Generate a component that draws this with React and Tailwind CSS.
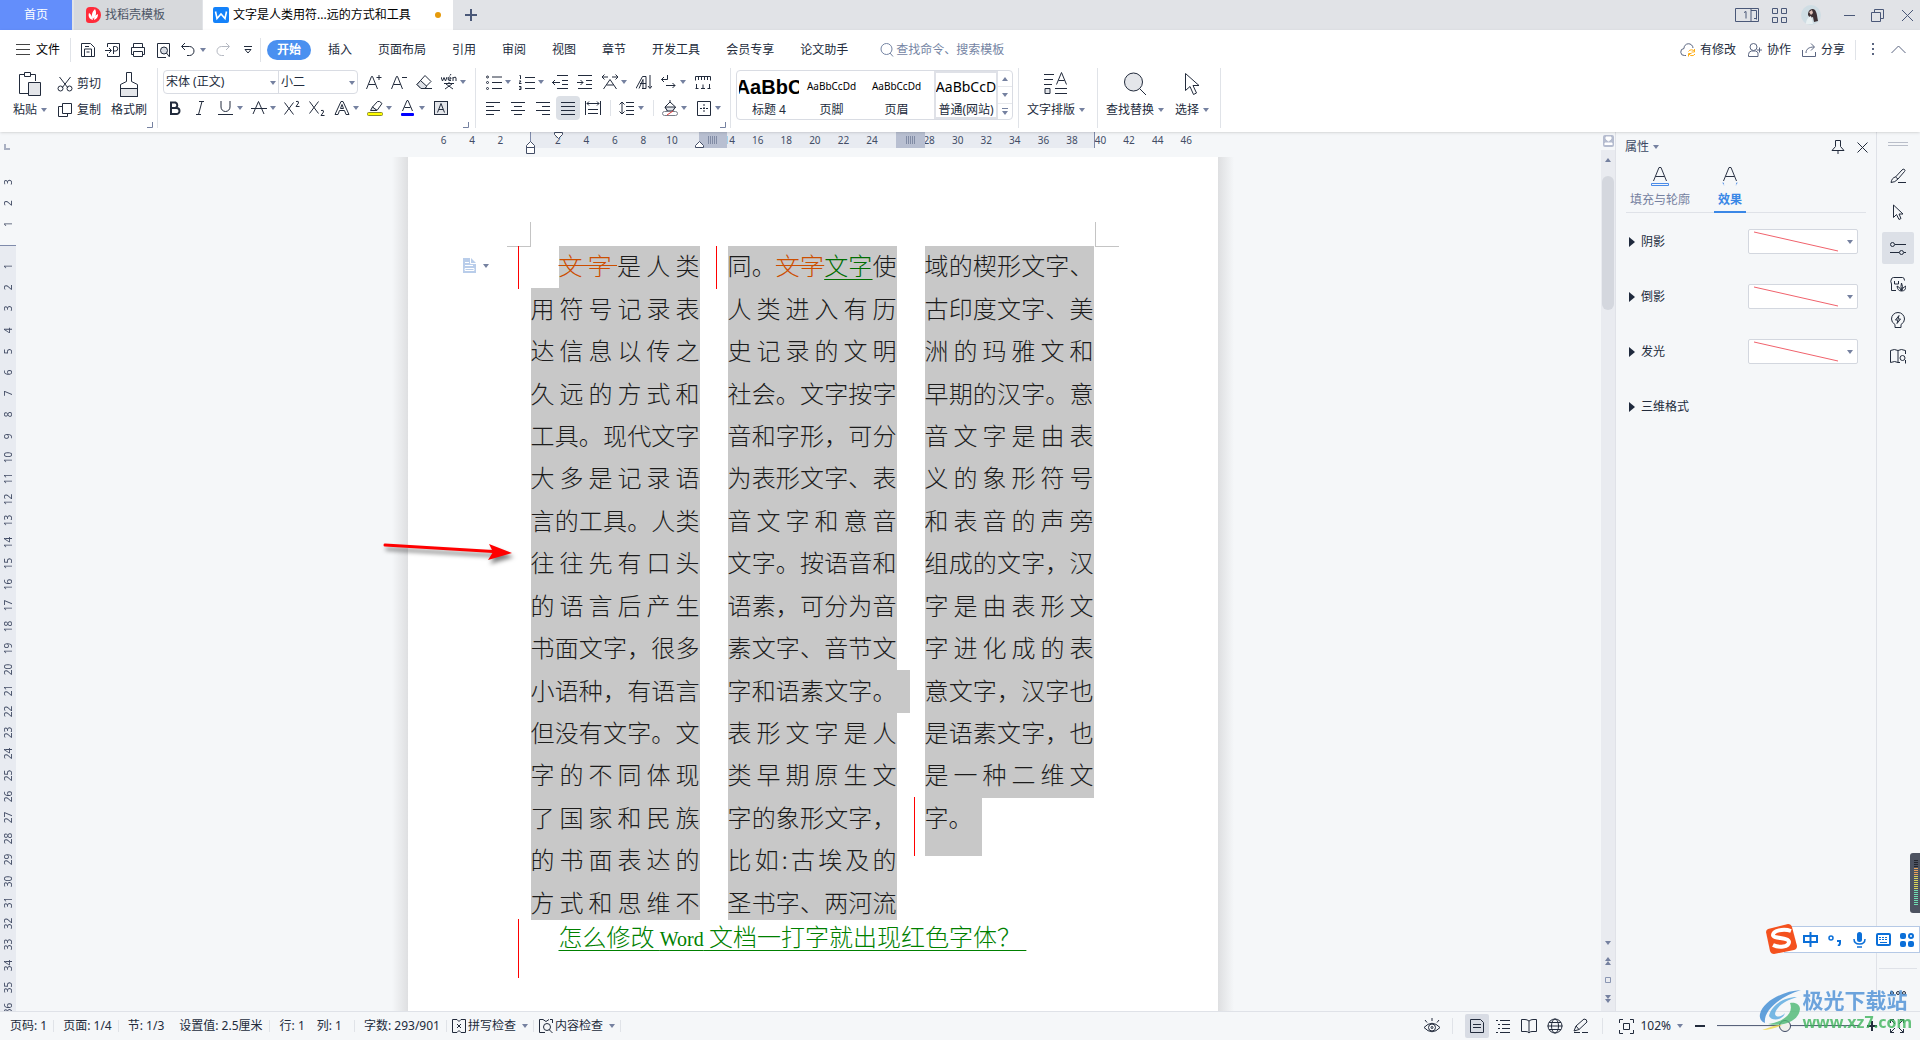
import React from "react";

const Ico = ({ d, w = 16, h = 16, className = "", children }) => (
  <svg width={w} height={h} viewBox={`0 0 ${w} ${h}`} fill="none" stroke="currentColor" className={`shrink-0 ${className}`} aria-hidden="true">
    {d && <path d={d} />}
    {children}
  </svg>
);

const Caret = ({ className = "" }) => (
  <svg width="6" height="4" viewBox="0 0 6 4" className={`shrink-0 fill-[#7581a0] ${className}`} aria-hidden="true">
    <path d="M0 0h6L3 4z" />
  </svg>
);

// icon button of the ribbon, with an optional drop-down arrow
const Tool = ({ label, d, drop, children }) =>
  drop ? (
    <button type="button" aria-label={label} className="flex h-6 w-[33px] items-center gap-[3px]">
      <Ico d={d}>{children}</Ico>
      <Caret />
    </button>
  ) : (
    <button type="button" aria-label={label} className="flex h-6 w-[25px] items-center">
      <Ico d={d}>{children}</Ico>
    </button>
  );

const Rule = ({ className = "" }) => <div className={`w-px shrink-0 bg-[#e0e3e8] ${className}`} />;

const Corner = () => <Ico w={6} h={6} d="M5.5 0v5.5H0" className="self-end text-[#7581a0]" />;

function TitleBar() {
  return (
    <header className="flex h-[30px] bg-[#e1e3e7]">
      <button type="button" className="w-[72px] bg-[#638efb] text-white">首页</button>
      <button type="button" className="ml-[2px] flex w-32 items-center gap-1 bg-[#d7d9dc] pl-3 text-[#4c5566]">
        <svg width="15" height="16" viewBox="0 0 15 16" aria-hidden="true">
          <path d="M0 4Q0 0 4 0h3a8 8 0 0 1 0 16H3q-3 0-3-3z" fill="#ff2b3a" />
          <path d="M7 13C3 12 2 9 3 6c2 1 3 3 4 7zM7 12C5 8 6 5 9 2c2 4 1 7-2 10zM8 13c0-3 1-5 4-6 0 3-1 5-4 6z" fill="#fff" />
        </svg>
        找稻壳模板
      </button>
      <button type="button" className="ml-px flex w-[250px] items-center bg-white pl-[10px] text-black">
        <svg width="16" height="16" viewBox="0 0 16 16" aria-hidden="true">
          <rect width="16" height="16" rx="2" fill="#1482fa" />
          <path d="M2.500 4.500l1.500 7 4-4.500 4 4.500 1.500-7" fill="none" stroke="#fff" strokeWidth="1.600" />
        </svg>
        <span className="ml-1">文字是人类用符...远的方式和工具</span>
        <span className="ml-6 size-[6px] rounded-full bg-[#e69a0b]" />
      </button>
      <button type="button" aria-label="新建" className="flex w-9 items-center justify-center text-[#4a5878]">
        <Ico w={12} h={12}><path d="M6 0v12M0 6h12" strokeWidth="2" /></Ico>
      </button>
      <div className="ml-auto flex items-center pr-[7px] text-[#4a5878]">
        <Ico w={24} h={14} d="M.5.500h23v13H.500zM16 .500v13M16 2.500h5.500v9M9 4.500l2-1v7"><path d="M19 10.500h2" /></Ico>
        <Ico w={15} h={15} className="ml-[13px]" d="M.5.500h5v5h-5zM9.500.500h5v5h-5zM.500 9.500h5v5h-5zM9.500 9.500h5v5h-5z" />
        <svg width="20" height="20" viewBox="0 0 20 20" className="ml-[14px]" aria-hidden="true">
          <circle cx="10" cy="10" r="10" fill="#cfdde4" />
          <path d="M7 10c0-4 2-6 5-6 4 1 4 7 5 12l-4 1-1-5-3 1z" fill="#3c3034" />
          <path d="M8 7l3-2 1 3-2 2z" fill="#e0c4bb" />
          <path d="M5 19c0-4 2-7 5-8l2 8z" fill="#e8f0f2" />
        </svg>
        <Rule className="ml-[10px] h-5 bg-[#c3c7cf]" />
        <Ico w={11} h={11} className="ml-3" d="M0 5.500h11" />
        <Ico w={13} h={13} className="ml-4" d="M.5 3.500h9v9h-9zM3.500 3.500v-3h9v9h-3" />
        <Ico w={11} h={11} className="ml-[18px]" d="M0 0l11 11M11 0L0 11" />
      </div>
    </header>
  );
}

const menus = ["插入", "页面布局", "引用", "审阅", "视图", "章节", "开发工具", "会员专享", "论文助手"];

function MenuRow() {
  return (
    <nav className="flex h-9 items-center pt-[3px] pl-4">
      <button type="button" className="flex items-center gap-[6px] text-black">
        <Ico w={14} h={11} d="M0 .5h14M0 5.500h14M0 10.500h14" className="text-[#444]" />
        文件
      </button>
      <Rule className="ml-[10px] h-6" />
      <div className="ml-[9px] flex items-center gap-[9px]">
        <button type="button" aria-label="保存"><Ico d="M1.500 1.500h9l4 4v9h-13zM4.500 14v-7h7v7M5 4.500h4M6.500 10h3" /></button>
        <button type="button" aria-label="输出为PDF"><Ico d="M2.500 5V1.500h12v13h-12V12M0 8.500h6M4 6l2.500 2.500L4 11M8.500 12V4.500h2a2 2 0 0 1 0 4.500h-2" /></button>
        <button type="button" aria-label="打印"><Ico d="M3.500 5V1.500h9V5M3.500 12.500h-2v-7h13v7h-2M3.500 9.500h9v5h-9z" /></button>
        <button type="button" aria-label="打印预览">
          <Ico><path d="M11 15.500H2.500v-14h12v13" /><circle cx="9" cy="8.500" r="3.500" fill="#d9dde4" /><path d="M11.500 11l3 4" /></Ico>
        </button>
        <button type="button" aria-label="撤销" className="flex items-center gap-1"><Ico d="M5 1L1.500 4.500 5 8M2 4.500h7.500a4.500 4.500 0 0 1 0 9H7" /><Caret /></button>
        <button type="button" aria-label="恢复" className="text-[#b5b9c2]"><Ico d="M11 1l3.500 3.500L11 8M14 4.500H6.500a4.500 4.500 0 0 0 0 9H9" /></button>
        <button type="button" aria-label="自定义快速访问工具栏" className="ml-1"><Ico w={8} h={8} d="M0 .5h8M1 3.500h6L4 7z" /></button>
      </div>
      <Rule className="ml-2 h-6" />
      <button type="button" className="ml-[6px] h-5 w-11 rounded-full bg-[#4a90f0] font-bold text-white">开始</button>
      <div className="ml-1 flex">
        {menus.map((m) => (
          <button key={m} type="button" className="px-[13px]">{m}</button>
        ))}
      </div>
      <label className="ml-[18px] flex items-center gap-px text-[#7484a3]">
        <Ico d="M14 14.500l-3-3.500"><circle cx="7.500" cy="7" r="5.500" /></Ico>
        <input aria-label="查找命令、搜索模板" placeholder="查找命令、搜索模板" className="w-32 bg-transparent outline-none placeholder:text-[#7484a3]" />
      </label>
      <div className="ml-auto flex items-center pr-[14px]">
        <button type="button" className="flex items-center gap-1">
          <Ico><path d="M6 13.500H4.500a3.500 3.500 0 0 1-.5-7 4.500 4.500 0 0 1 9-.5" className="stroke-[#5a6580]" /><path d="M8.500 9.500a3.500 3.500 0 0 1 6 0M15 12a3.500 3.500 0 0 1-6 0M14.500 7v3h-3M8.500 14.500v-3h3" className="stroke-[#ffad14]" /></Ico>
          有修改
        </button>
        <button type="button" className="ml-[11px] flex items-center gap-1">
          <Ico className="text-[#5a6580]" d="M1.500 14.500v-2q0-3 3-3.500h4q2 .5 2.500 2v3.500zM10 8h5M12.500 5.500v5"><circle cx="6.500" cy="5" r="3.500" /></Ico>
          协作
        </button>
        <button type="button" className="ml-[10px] flex items-center gap-1">
          <Ico className="text-[#5a6580]" d="M1.500 8v6.500h13V10M5 11c0-4 3-6 8-6M10 1.500L13.500 5 10 8.500" />
          分享
        </button>
        <Rule className="ml-[10px] h-5" />
        <Ico w={3} h={13} className="ml-4 fill-[#5a6580]"><path d="M0 0h2v2H0zM0 5h2v2H0zM0 10h2v2H0z" stroke="none" /></Ico>
        <Ico w={15} h={9} className="ml-4 text-[#5a6580]" d="M.5 8L7.500 1l7 7" />
      </div>
    </nav>
  );
}

const StyleCard = ({ sample, name, sampleClass, className = "w-[65px]" }) => (
  <button type="button" className={`flex h-[48px] flex-col items-center overflow-hidden ${className}`}>
    <span className={`flex h-8 shrink-0 items-center whitespace-nowrap text-black ${sampleClass}`}>{sample}</span>
    <span className="leading-[14px] whitespace-nowrap">{name}</span>
  </button>
);

const BigTool = ({ label, className, children }) => (
  <button type="button" className={`flex flex-col items-center justify-between ${className}`}>
    {children}
    <span className="flex items-center gap-1 leading-4 whitespace-nowrap">{label}<Caret /></span>
  </button>
);

function Ribbon() {
  return (
    <div className="flex h-[66px] pt-[2px] pb-1">
      <div className="flex w-[157px] pt-1 pl-[13px]">
        <BigTool label="粘贴" className="h-[46px]">
          <Ico w={22} h={24}>
            <path d="M5 2.500H.500v19H9M12 2.500h4.500V9" />
            <path d="M5.500.500h6v4h-6z" />
            <path d="M9.500 10.500h12v13h-12z" fill="#e4e6ea" />
          </Ico>
        </BigTool>
        <div className="ml-[10px] flex flex-col gap-[3px]">
          <button type="button" className="flex h-[23px] items-center gap-1">
            <Ico d="M2.500 1l8.500 11M13.500 1L5 12"><circle cx="3.500" cy="12.500" r="2.500" /><circle cx="12.500" cy="12.500" r="2.500" /></Ico>剪切
          </button>
          <button type="button" className="flex h-[23px] items-center gap-1">
            <Ico d="M5.500 1.500h9v10h-9zM5 4.500H1.500v10h9V12" />复制
          </button>
        </div>
        <button type="button" className="ml-[10px] flex h-[46px] flex-col items-center justify-between">
          <Ico w={18} h={25}><path d="M.5 16.500h17v8H.500z" fill="#e4e6ea" /><path d="M6.500 9.500v-9h5v9l6 3v12H.500v-12z" /></Ico>
          <span className="leading-4">格式刷</span>
        </button>
        <Corner />
      </div>
      <Rule />
      <div className="flex w-[317px] items-stretch pt-[2px] pl-[5px]">
        <div className="flex flex-1 flex-col">
          <div className="flex items-center">
            <div className="flex h-6 w-[195px] rounded-sm border border-[#d9dce3]">
              <div className="relative w-[115px] border-r border-[#d9dce3]">
                <select aria-label="字体" className="h-full w-full appearance-none pl-[2px]"><option>宋体 (正文)</option></select>
                <Caret className="pointer-events-none absolute top-[10px] right-[2px]" />
              </div>
              <div className="relative flex-1">
                <select aria-label="字号" className="h-full w-full appearance-none pl-[2px]"><option>小二</option></select>
                <Caret className="pointer-events-none absolute top-[10px] right-[2px]" />
              </div>
            </div>
            <div className="ml-2 flex">
              <Tool label="增大字号" d="M.5 15L5.500 2.500h1L11.500 15M2.500 10.500h7M10.500 3.500h5M13 1v5" />
              <Tool label="减小字号" d="M.5 15L5.500 2.500h1L11.500 15M2.500 10.500h7M11 3.500h5" />
              <Tool label="清除格式"><path d="M9 1.500l6 6-7 7H5l-4-4z" fill="#fff" /><path d="M4.500 6.500l6.500 6-2.500 2H5l-4-4z" fill="#dfe2e7" /><path d="M5 14.500h11" /></Tool>
              <Tool label="拼音指南" drop>
                <path d="M0 3l1.500 4L3 3.500 4.500 7 6 3M7 5h3q0-2-1.500-2T7 5t3 1.500M9 1.500l1-1.500M12 7V3M12 4q3-2 3 0v3M3 9.500h10M8 8v2M5 10l7 5M11 10l-7 5" />
              </Tool>
            </div>
          </div>
          <div className="mt-[2px] flex pl-[5px]">
            <Tool label="加粗"><path d="M3 2.500h4.500a3 3 0 0 1 0 5.500H3zM3 8h5.500a3 3 0 0 1 0 6H3z" strokeWidth="2" /></Tool>
            <Tool label="倾斜" d="M6 1.500h5M3 14.500h5M9 1.500l-3.500 13" />
            <Tool label="下划线" drop d="M3 1v6a4.500 4.500 0 0 0 9 0V1M0 14.500h15" />
            <Tool label="删除线" drop d="M2 14L7.500 1.500 13 14M0 8.500h16" />
            <Tool label="上标" d="M.5 2.500l9 12M9.500 2.500l-9 12M12 1.500q3-1 2.500 1.500L12 6.500h3.500" />
            <Tool label="下标" d="M.5 1.500l9 12M9.500 1.500l-9 12M12 10.500q3-1 2.500 1.500L12 15.500h3.500" />
            <Tool label="文字效果" drop d="M1 14.500L7 1.500h2l6 13h-3l-1.500-4h-5L4 14.500zM6.500 8.500h3L8 4.500z" />
            <Tool label="突出显示" drop>
              <path d="M5.500 7l5-5.500q2-1 4.500 2L10 10.500z" />
              <path d="M5.500 7l4.500 3.500H3.500z" fill="#dfe2e7" />
              <rect x=".5" y="12.500" width="15" height="3" rx="1" fill="#ff0" className="stroke-[#8a8a2a]" />
            </Tool>
            <Tool label="字体颜色" drop><path d="M2.500 11L7 .500h1L12.500 11M4.500 7.500h6" /><rect x="1" y="13" width="13" height="3" rx="1" fill="#00f" stroke="none" /></Tool>
            <Tool label="字符底纹"><rect x="1.500" y="1.500" width="13" height="13" fill="#e4e6ea" /><path d="M4.500 12.500L8 3.500l3.500 9M6 9.500h4" /></Tool>
          </div>
        </div>
        <div className="flex w-0 justify-end"><div className="mr-[6px] flex"><Corner /></div></div>
      </div>
      <Rule />
      <div className="flex w-[254px] pt-[2px] pl-[10px]">
        <div className="flex flex-1 flex-col gap-[2px]">
          <div className="flex">
            <Tool label="项目符号" drop d="M6 3h10M6 8.500h10M6 14.500h10"><circle cx="1.500" cy="3" r="1" /><circle cx="1.500" cy="8.500" r="1" /><circle cx="1.500" cy="14.500" r="1" /></Tool>
            <Tool label="编号" drop d="M6 3.500h10M6 8.500h10M6 14.500h10M.5 1.500h1V5M0 7h2l-2 2.500h2.500M0 12.500h2v3H0M.5 14h1.500" />
            <Tool label="减少缩进量" d="M5 1.500h11M10 6.500h6M10 10.500h6M5 14.500h11M0 8.500h8M3 6L.500 8.500 3 11" />
            <Tool label="增加缩进量" d="M1 1.500h14M9 6.500h6M9 10.500h6M1 14.500h14M0 8.500h6M3.500 6L6 8.500 3.500 11" />
            <Tool label="中文版式" drop d="M1.500 15L8 5.500 14.500 15M4.500 11h7M0 3h6M2.500.500L0 3l2.500 2.500M10 3h6M13.500.500L16 3l-2.500 2.500" />
            <div className="w-px" />
            <Tool label="排序" d="M0 14.500L6.500 2.500H10v12H6M4 9.500h6M3 14.500l4-9v9M14 1v13M12 12l2 2.500 2-2.500" />
            <Tool label="换行" drop d="M6.500 1v4.500H.500M3 3L.500 5.500 3 8M5 11.500h9M11.500 9l2.500 2.500-2.500 2.500" />
            <div className="w-px" />
            <Tool label="制表位" d="M.5 6.500V2.500h15v4M3.500 3v3M6.500 3v3M9.500 3v3M12.500 3v3M1.500 10v5M.5 14.500h3M6 14.500h4M8 10.500v4M14.500 10v5M12.500 14.500h3" />
          </div>
          <div className="flex items-center">
            <Tool label="左对齐" d="M0 2.500h14M0 6.500h8M0 10.500h14M0 14.500h8" />
            <Tool label="居中" d="M0 2.500h14M3 6.500h8M0 10.500h14M3 14.500h8" />
            <div className="flex w-5"><Tool label="右对齐" d="M0 2.500h14M6 6.500h8M0 10.500h14M6 14.500h8" /></div>
            <button type="button" aria-label="两端对齐" aria-pressed="true" className="flex size-6 items-center justify-center rounded-sm bg-[#dce0e6]">
              <Ico w={14} h={14} d="M0 1.500h14M0 5.500h14M0 9.500h14M0 13.500h14" />
            </button>
            <div className="ml-[5px] flex"><Tool label="分散对齐" d="M.5 1v14M15.500 1v14M2 3.500h12M4 1.500L2 3.500l2 2M12 1.500l2 2-2 2M3 9.500h10M3 13.500h10" /></div>
            <Rule className="h-4" />
            <div className="ml-2 flex"><Tool label="行距" drop d="M3 2v12M.500 4.500L3 2l2.500 2.500M.500 11.500L3 14l2.500-2.500M7 2.500h8M7 6.500h8M7 10.500h8M7 14.500h8" /></div>
            <Rule className="ml-px h-4" />
            <div className="ml-2 flex">
              <Tool label="底纹颜色" drop><path d="M3 7l5-5 5.500 5-3 4H5.500z" fill="#fff" /><path d="M3 7h10.500l-3 4H5.500zM8 3V0" fill="#dfe2e7" /><rect x=".5" y="11.500" width="15" height="4" rx="2" fill="#fff" className="stroke-[#7a7f8a]" /><path d="M5 15l6-4" className="stroke-[#e03a3a]" /></Tool>
              <div className="w-px" />
              <Tool label="边框" drop><path d="M1.500 1.500h13v14h-13z" /><path d="M8 4v9M4 8.500h9" strokeDasharray="2 1" /></Tool>
            </div>
          </div>
        </div>
        <div className="flex w-0 justify-end"><div className="mr-[4px] flex"><Corner /></div></div>
      </div>
      <Rule />
      <div className="w-[287px] pt-[2px] pl-[5px]">
        <div className="flex h-[50px] w-[277px] rounded-sm border border-[#d9dce3] pl-[2px]">
          <StyleCard sample="AaBbC" name="标题 4" sampleClass="font-['Liberation_Sans',sans-serif] text-xl font-bold" className="w-[60px]" />
          <StyleCard sample="AaBbCcDd" name="页脚" sampleClass="text-[10px]" />
          <StyleCard sample="AaBbCcDd" name="页眉" sampleClass="text-[10px]" />
          <StyleCard sample="AaBbCcD" name="普通(网站)" sampleClass="-mt-[2px] text-sm" className="ml-[5px] w-16 border-2 border-[#dfe1e7]" />
          <div className="flex flex-1 flex-col divide-y divide-[#e6e8ec]">
            <button type="button" aria-label="上一行" className="flex flex-1 items-center justify-center"><Caret className="rotate-180" /></button>
            <button type="button" aria-label="下一行" className="flex flex-1 items-center justify-center"><Caret /></button>
            <button type="button" aria-label="更多样式" className="flex flex-1 flex-col items-center justify-center gap-[2px]"><span className="h-px w-[6px] bg-[#7581a0]" /><Caret /></button>
          </div>
        </div>
      </div>
      <Rule />
      <BigTool label="文字排版" className="mt-1 mr-1 h-[46px] w-[74px]">
        <Ico w={24} h={24} d="M0 2.500h10M0 7.500h9M0 12.500h8M12.500 12.500L17.500.500l5 12M14.500 8.500h6M11 16.500h12M11 21.500h12"><path d="M1 16.500h5v5H1z" fill="#e4e6ea" /></Ico>
      </BigTool>
      <Rule />
      <BigTool label="查找替换" className="mt-1 h-[46px] w-[74px]">
        <Ico w={24} h={24} d="M17 17l6 6"><circle cx="10.500" cy="10" r="9" fill="#e4e6ea" /></Ico>
      </BigTool>
      <BigTool label="选择" className="mt-1 mr-2 h-[46px] w-10">
        <Ico w={18} h={24} d="M2.500 1.500v17l4.500-4 3.500 8 3-1.500-3.500-7.500h6z" />
      </BigTool>
      <Rule />
    </div>
  );
}

const leftNumbers = [6, 4, 2];
const rightNumbers = Array.from({ length: 23 }, (_, i) => (i + 1) * 2);
const sideNumbers = Array.from({ length: 36 }, (_, i) => i + 1);
// numbers that fall inside the gaps between text columns
const hiddenNumbers = [12, 26];

const ColumnGap = ({ className }) => (
  <div className={`absolute top-0 flex h-4 items-center justify-center bg-[#b8bfd1] ${className}`}>
    <svg width="9" height="9" viewBox="0 0 9 9" aria-hidden="true"><path d="M0 1h9M0 3h9M0 5h9M0 7h9" stroke="#4a5878" strokeDasharray="1 1" /></svg>
  </div>
);

function TopRuler() {
  return (
    <div className="relative mx-auto flex h-[25px] w-[810px] text-[10px] leading-4 text-[#434d66]">
      <div className="absolute top-0 left-[122px] h-4 w-[565px] border-x border-[#7f8bab] bg-[#e8ebf1]" />
      <div className="relative ml-[22px] grid w-[85px] grid-cols-3 text-center">
        {leftNumbers.map((n) => <span key={n}>{n}</span>)}
      </div>
      <div className="relative ml-[29px] grid w-[657px] grid-flow-col auto-cols-fr text-center">
        {rightNumbers.map((n) => <span key={n}>{hiddenNumbers.includes(n) ? null : n}</span>)}
      </div>
      <ColumnGap className="left-[291px] w-7" />
      <ColumnGap className="left-[488px] w-[29px]" />
      <Ico w={9} h={13} className="absolute top-[9px] left-[118px] fill-white" d="M.5 4.500l4-4 4 4v2h-8zM.500 6.500h8v6h-8z" />
      <Ico w={9} h={7} className="absolute top-0 left-[146px] fill-white" d="M.5.500h8v2l-4 4-4-4z" />
      <Ico w={9} h={7} className="absolute top-[9px] left-[287px] fill-white" d="M.5 6.500h8v-2l-4-4-4 4z" />
    </div>
  );
}

function SideRuler() {
  return (
    <div className="flex w-6 shrink-0 flex-col overflow-hidden text-[10px] leading-4 text-[#434d66]">
      <Ico w={6} h={6} className="mt-3 ml-1 text-[#a9b0c2]"><path d="M1 0v5h5" strokeWidth="2" /></Ico>
      <div className="mt-[22px] grid h-[63px] w-4 shrink-0 auto-rows-fr">
        {[3, 2, 1].map((n) => (
          <span key={n} className="rotate-180 text-center [writing-mode:vertical-rl]">{n}</span>
        ))}
      </div>
      <div className="mt-[10px] w-4 shrink-0 border-t border-[#7f8bab] bg-[#e8ebf1] pt-[10px]">
        <div className="grid h-[763px] auto-rows-fr">
          {sideNumbers.map((n) => (
            <span key={n} className="rotate-180 text-center [writing-mode:vertical-rl]">{n}</span>
          ))}
        </div>
      </div>
    </div>
  );
}

const Removed = ({ children }) => <s className="text-[#cc4e00] decoration-1">{children}</s>;

const columnOne = ["用符号记录表", "达信息以传之", "久远的方式和", "工具。现代文字", "大多是记录语", "言的工具。人类", "往往先有口头", "的语言后产生", "书面文字，很多", "小语种，有语言", "但没有文字。文", "字的不同体现", "了国家和民族", "的书面表达的", "方式和思维不"];
const columnTwoTop = ["人类进入有历", "史记录的文明", "社会。文字按字", "音和字形，可分", "为表形文字、表", "音文字和意音", "文字。按语音和", "语素，可分为音", "素文字、音节文"];
const columnTwoEnd = ["表形文字是人", "类早期原生文", "字的象形文字，", "比如:古埃及的", "圣书字、两河流"];
const columnThree = ["域的楔形文字、", "古印度文字、美", "洲的玛雅文和", "早期的汉字。意", "音文字是由表", "义的象形符号", "和表音的声旁", "组成的文字，汉", "字是由表形文", "字进化成的表", "意文字，汉字也", "是语素文字，也", "是一种二维文"];

const Line = ({ className = "", children }) => (
  <div className={`flex items-center bg-[#c8c8c8] pb-1 ${className}`}>
    <p className="w-full whitespace-nowrap [text-align-last:justify]">{children}</p>
  </div>
);

const Column = ({ children }) => (
  <div className="grid h-[679px] w-[169px] grid-rows-[repeat(16,minmax(0,1fr))]">{children}</div>
);

function Page() {
  return (
    <article className="relative mx-auto h-full w-[810px] bg-white pt-[89px] pl-[123px] font-['Noto_Sans_CJK_SC',sans-serif] text-2xl font-light text-[#1c1c1c]">
      <div className="absolute top-0 right-full h-full w-4 bg-linear-to-l from-[#dedfe1] to-[#f5f7f9]" />
      <div className="absolute top-0 left-full h-full w-4 bg-linear-to-r from-[#dedfe1] to-[#f5f7f9]" />
      <div className="absolute top-[65px] left-[99px] h-[25px] w-6 border-r border-b border-[#c4c4c4]" />
      <div className="absolute top-[65px] left-[687px] h-[25px] w-6 border-b border-l border-[#c4c4c4]" />
      <div className="absolute top-[89px] left-[110px] h-[43px] w-px bg-[#f00]" />
      <div className="absolute top-[89px] left-[308px] h-[43px] w-px bg-[#f00]" />
      <div className="absolute top-[640px] left-[506px] h-[59px] w-px bg-[#f00]" />
      <div className="absolute top-[762px] left-[110px] h-[59px] w-px bg-[#f00]" />
      <button type="button" aria-label="段落布局" className="absolute top-[101px] left-[55px] flex items-center gap-[7px]">
        <svg width="13" height="15" viewBox="0 0 13 15" aria-hidden="true">
          <path d="M0 0h8l5 5v10H0z" fill="#b9cdea" />
          <path d="M7.500 0v5.500H13M2 4.500h4M2 7.500h8M2 10.500h9v2H2z" fill="none" stroke="#fff" />
        </svg>
        <Caret />
      </button>
      <div className="flex h-[674px] gap-7 overflow-hidden">
        <Column>
          <Line className="ml-7"><Removed>文字</Removed>是人类</Line>
          {columnOne.map((t) => <Line key={t}>{t}</Line>)}
        </Column>
        <Column>
          <Line>同。<Removed>文字</Removed><ins className="text-[#006d00] underline decoration-1 underline-offset-4">文字</ins>使</Line>
          {columnTwoTop.map((t) => <Line key={t}>{t}</Line>)}
          <Line className="-mr-[13px] pr-[13px]">字和语素文字。</Line>
          {columnTwoEnd.map((t) => <Line key={t}>{t}</Line>)}
        </Column>
        <Column>
          {columnThree.map((t) => <Line key={t}>{t}</Line>)}
          <div className="-mb-4 w-[57px] bg-[#c8c8c8] pt-[3px] whitespace-nowrap">字。</div>
        </Column>
      </div>
      <p className="ml-7 text-[#008000]">
        <ins className="underline decoration-1 underline-offset-4">怎么修改 <span className="font-['Liberation_Serif',serif] text-xl font-normal">Word</span> 文档一打字就出现红色字体？&nbsp;</ins>
      </p>
    </article>
  );
}

function ScrollBar() {
  return (
    <div className="flex w-[15px] shrink-0 flex-col items-center border-r border-[#e0e2e8] bg-[#e9ebf0] text-[#8a96b3]">
      <div className="flex h-[18px] w-full items-center justify-center bg-[#f5f7f9]">
        <svg width="11" height="12" viewBox="0 0 11 12" aria-hidden="true">
          <rect width="11" height="12" rx="2" fill="#b5bccf" />
          <path d="M3 2h5v2L5.500 6 3 4zM2 10V8h7v2M5.500 8v2" fill="#fff" stroke="#fff" />
        </svg>
      </div>
      <Caret className="mt-2 rotate-180" />
      <div className="mt-[14px] h-[134px] w-3 rounded-full bg-[#d4d7de]" />
      <div className="mt-auto flex flex-col items-center pb-2">
        <Caret />
        <Caret className="mt-3 rotate-180" />
        <Caret className="rotate-180" />
        <Ico w={6} h={6} className="mt-3" d="M.5.500h5v5h-5z" />
        <Caret className="mt-3" />
        <Caret />
      </div>
    </div>
  );
}

const EffectRow = ({ name, box = true }) => (
  <div className="flex h-[55px] items-center pl-[3px]">
    <svg width="6" height="10" viewBox="0 0 6 10" className="fill-[#1f2a3d]" aria-hidden="true"><path d="M0 0l6 5-6 5z" /></svg>
    <span className="ml-[6px]">{name}</span>
    {box && (
      <div className="relative mr-[8px] ml-auto h-[25px] w-[110px] rounded-xs border border-[#d3d7df] bg-white">
        <select aria-label={name} className="absolute inset-0 h-full w-full appearance-none"><option /></select>
        <svg width="108" height="23" viewBox="0 0 108 23" className="pointer-events-none absolute" aria-hidden="true">
          <path d="M5 2l84 19" stroke="#f0626c" />
        </svg>
        <Caret className="pointer-events-none absolute top-[10px] right-1" />
      </div>
    )}
  </div>
);

function PropertyPanel() {
  return (
    <aside className="w-[261px] shrink-0 border-r border-[#dfe2e8] pr-[10px] pl-[9px]">
      <div className="-mr-[2px] flex h-[30px] items-center">
        <button type="button" className="flex items-center gap-1 text-[#3b4763]">属性<Caret /></button>
        <button type="button" aria-label="固定" className="ml-auto"><Ico w={14} h={14} d="M4.500.500h5v6l3.500 4H1l3.500-4zM7 10.500V14" /></button>
        <button type="button" aria-label="关闭" className="ml-3"><Ico w={11} h={11} d="M.5.500l10 10M10.500.500l-10 10" /></button>
      </div>
      <div className="ml-px flex border-b border-[#dfe2e8]">
        <button type="button" className="flex h-[50px] flex-col items-center gap-[6px] pt-1 pl-1 text-[#7581a0]">
          <Ico w={18} h={20} className="text-[#2b3345]"><path d="M2.500 15L8 1.500h2L15.500 15M4.500 10.500h9" /><path d="M.5 17.500h17v2H.500z" className="stroke-[#4a8be8]" /></Ico>
          <span className="leading-4">填充与轮廓</span>
        </button>
        <button type="button" className="-mb-px ml-6 flex h-[51px] w-8 flex-col items-center gap-[6px] border-b-2 border-[#3a87e6] pt-1 font-bold text-[#3a87e6]">
          <Ico w={18} h={20} className="text-[#2b3345]"><path d="M2.500 15L8 1.500h2L15.500 15M4.500 10.500h9" /><path d="M2 16.500l1 3M16 16.500l-1 3" strokeDasharray="2 1" className="stroke-[#4a8be8]" /></Ico>
          <span className="leading-4">效果</span>
        </button>
      </div>
      <div className="ml-px pt-px">
        <EffectRow name="阴影" />
        <EffectRow name="倒影" />
        <EffectRow name="发光" />
        <EffectRow name="三维格式" box={false} />
      </div>
    </aside>
  );
}

function SideTools() {
  return (
    <div className="flex w-[43px] shrink-0 flex-col items-center pt-[10px] pr-[2px]">
      <div className="h-1 w-5 border-y border-[#b9bec9]" />
      <div className="mt-[14px] flex flex-col gap-1">
        <button type="button" aria-label="样式" className="flex size-8 items-center justify-center"><Ico d="M14.500 1.500q1 1 0 2L8 11 5.500 9 12 2q1-1.500 2.500-.5zM5.500 9Q2 9.500 1 14.500q4 0 7-3.500M8 14.500h8" /></button>
        <button type="button" aria-label="选择" className="flex size-8 items-center justify-center"><Ico d="M3.500 1v12.500l3-3 2.500 5 2-1-2-4.500h4z" /></button>
        <button type="button" aria-label="属性" aria-pressed="true" className="flex size-8 items-center justify-center rounded-xs bg-[#dce0e7]"><Ico d="M5 4.500h11M0 12.500h9M14 12.500h2"><circle cx="2.500" cy="4.500" r="2" /><circle cx="11.500" cy="12.500" r="2" /></Ico></button>
        <button type="button" aria-label="素材" className="flex size-8 items-center justify-center"><Ico d="M6 14.500H1.500V8Q0 5 1.500 3q.5-1.500 2-1.500h9q2 0 2 3M4.500 5v3h4V5M11.500 15q-4 0-4.500-5 3 1 4.500 5-1-5 0-8 2 3 0 8 1-4 4.500-5 0 5-4.500 5z" /></button>
        <button type="button" aria-label="推荐" className="flex size-8 items-center justify-center"><Ico d="M5 12.500Q1.500 10.500 1.500 7a6.500 6.500 0 0 1 13 0q0 3.500-3.500 5.500v3H5zM9 3.500L5.500 8H8l-1 3.500L10.500 7H8z" /></button>
        <button type="button" aria-label="词典" className="flex size-8 items-center justify-center"><Ico d="M8 14.500q-3-2-7.500 0v-12q4-2 7.500 0zM8 2.500q3-2 7.500 0V6M8 14.500h2M15.500 12v3.500"><circle cx="12.500" cy="10" r="2.500" /></Ico></button>
      </div>
      <div className="mt-auto h-px w-[38px] bg-[#dfe2e8]" />
      <button type="button" aria-label="更多" className="mt-[22px] mb-4"><Ico w={16} h={4}><circle cx="2" cy="2" r="1.500" /><circle cx="8" cy="2" r="1.500" /><circle cx="14" cy="2" r="1.500" /></Ico></button>
    </div>
  );
}

function StatusBar() {
  return (
    <footer className="flex h-[29px] items-center border-t border-[#dfe2e8] bg-[#f5f7f9] whitespace-nowrap">
      <span className="pl-[10px]">页码: 1</span>
      <Rule className="ml-[6px] h-3" />
      <span className="ml-[9px]">页面: 1/4</span>
      <Rule className="ml-[6px] h-3" />
      <span className="ml-[9px]">节: 1/3</span>
      <span className="ml-[15px]">设置值: 2.5厘米</span>
      <Rule className="ml-[6px] h-3" />
      <span className="ml-[10px]">行: 1</span>
      <span className="ml-3">列: 1</span>
      <Rule className="ml-3 h-3" />
      <span className="ml-[9px]">字数: 293/901</span>
      <Rule className="ml-[6px] h-3" />
      <button type="button" className="ml-1 flex items-center gap-px">
        <Ico d="M6 1.500H1.500v13H6M10 1.500h4.500v13H10M6 1.500l2 2 2-2M6 14.500l2-2 2 2M6 6l4 4M10 6l-4 4" />拼写检查<Caret className="ml-[5px]" />
      </button>
      <Rule className="ml-[5px] h-3" />
      <button type="button" className="ml-1 flex items-center gap-px">
        <Ico d="M5 1.500H1.500v13H7M12 1.500h2.500V5M5 1.500l3 2 3-2M11 11.500l3.500 3.500"><circle cx="9" cy="9" r="3.500" /></Ico>内容检查<Caret className="ml-[5px]" />
      </button>
      <Rule className="ml-[5px] h-3" />
      <div className="ml-auto flex items-center">
        <button type="button" aria-label="护眼模式"><Ico d="M0 9.500Q8 1 16 9.500 8 18 0 9.500zM8 3V0M3 4.500L1 2M13 4.500L15 2"><circle cx="8" cy="9.500" r="3.500" /><circle cx="8" cy="9.500" r="1" /></Ico></button>
        <Rule className="ml-3 h-4" />
        <button type="button" aria-label="页面视图" aria-pressed="true" className="ml-3 flex size-6 items-center justify-center rounded-xs bg-[#d8dce4]"><Ico d="M1.500 1.500h10l3 3v10h-13zM4 6.500h8M4 9.500h8" /></button>
        <div className="ml-[6px] flex items-center gap-[10px]">
          <button type="button" aria-label="大纲"><Ico d="M5 2.500h10M7 6.500h8M7 10.500h8M5 14.500h10M1 2.500h2M3 6.500h2M3 10.500h2M1 14.500h2" /></button>
          <button type="button" aria-label="阅读版式"><Ico d="M8 14.500V3Q6 1.500 4 1.500H.500v12H5q2 0 3 1.500 1-1.500 3-1.500h4.500v-12H12Q10 1.500 8 3" /></button>
          <button type="button" aria-label="Web版式"><Ico d="M.5 8h15M2 4.500h12M2 11.500h12"><circle cx="8" cy="8" r="7" /><ellipse cx="8" cy="8" rx="3.500" ry="7" /></Ico></button>
          <button type="button" aria-label="写作模式"><Ico d="M1 13l2-5 8-7q3 0 3 3l-8 7.500zM3 8l3 3.500M9 14.500h6M1 14.500h6" /></button>
        </div>
        <Rule className="ml-[13px] h-4" />
        <button type="button" aria-label="适合页宽" className="ml-4"><Ico w={15} h={15} d="M.5 4V.500H4M11 .500h3.500V4M14.500 11v3.500H11M4 14.500H.500V11M4.500 4.500h6v6h-6z" /></button>
        <button type="button" className="ml-[6px] flex items-center gap-[6px]"><span>102%</span><Caret /></button>
        <button type="button" aria-label="缩小" className="ml-3"><Ico w={10} h={10}><path d="M0 5h10" strokeWidth="2" /></Ico></button>
        <input
          type="range"
          aria-label="显示比例"
          defaultValue="48"
          className="ml-3 h-3 w-[142px] appearance-none bg-linear-to-b from-transparent from-45% via-[#4a5570] via-45% to-transparent to-55% [&::-webkit-slider-thumb]:size-3 [&::-webkit-slider-thumb]:appearance-none [&::-webkit-slider-thumb]:rounded-full [&::-webkit-slider-thumb]:border [&::-webkit-slider-thumb]:border-[#3b4763] [&::-webkit-slider-thumb]:bg-[#f0f0ec]"
        />
        <button type="button" aria-label="放大" className="ml-2"><Ico w={10} h={10}><path d="M0 5h10M5 0v10" strokeWidth="2" /></Ico></button>
        <button type="button" aria-label="全屏" className="mr-4 ml-[13px]"><Ico w={14} h={14} d="M.5 4V.500H4M.500.500l4.500 4.500M10 .500h3.500V4M13.500.500L9 5M13.500 10v3.500H10M13.500 13.500L9 9M4 13.500H.500V10M.500 13.500L5 9" /></button>
      </div>
    </footer>
  );
}

// floating input-method toolbar
function InputBar() {
  return (
    <div className="absolute right-0 bottom-[87px] flex h-[27px] w-[136px] items-center border border-[#b5c9e6] bg-white pl-[18px] text-[#0b6fd8]">
      <svg width="33" height="32" viewBox="0 0 33 32" className="absolute -top-1 -left-5" aria-hidden="true">
        <path d="M3 6L23 1q3 0 4 3l5 19q0 3-3 4L9 31q-3 0-4-3L1 9q0-2 2-3z" fill="#f4511e" />
        <path d="M26 8C18 5 8 8 8 12s16 2 16 7-10 6-16 3" fill="none" stroke="#fff" strokeWidth="4" />
      </svg>
      <Ico w={15} h={15}><path d="M1 4h13v6H1zM7.500 0v15" strokeWidth="2" /></Ico>
      <Ico w={14} h={12} className="ml-[10px]"><circle cx="3" cy="4" r="2" strokeWidth="1.500" /><path d="M9 7h3v2q0 2-2 3" strokeWidth="2" /></Ico>
      <svg width="13" height="16" viewBox="0 0 13 16" className="ml-[11px]" aria-hidden="true">
        <rect x="4" width="5" height="10" rx="2.500" fill="#0b6fd8" />
        <path d="M1 7q0 5 5.500 5T12 7M4 15h5" fill="none" stroke="#0b6fd8" strokeWidth="1.500" />
      </svg>
      <Ico w={15} h={13} className="ml-[10px]"><rect x="1" y="1" width="13" height="11" rx="1" strokeWidth="2" /><path d="M3 4.500h9M3 6.500h9" strokeDasharray="2 1" /><path d="M4 9.500h7" /></Ico>
      <svg width="14" height="14" viewBox="0 0 14 14" className="ml-[9px]" aria-hidden="true">
        <g fill="#0b6fd8"><rect width="6" height="6" rx="2" /><rect y="8" width="6" height="6" rx="2" /><rect x="8" y="8" width="6" height="6" rx="2" /></g>
        <circle cx="11" cy="3" r="2" fill="none" stroke="#0b6fd8" strokeWidth="2" />
      </svg>
    </div>
  );
}

function LevelMeter() {
  return (
    <svg width="10" height="60" viewBox="0 0 10 60" className="absolute right-0 bottom-[127px]" aria-hidden="true">
      <path d="M10 0H3Q0 0 0 3v54q0 3 3 3h7z" fill="#4d5361" />
      <path d="M6 7v8" stroke="#23262e" strokeWidth="4" strokeDasharray="1 1" />
      <path d="M6 15v8" stroke="#e8a35a" strokeWidth="4" strokeDasharray="1 1" />
      <path d="M6 23v14" stroke="#d8d45a" strokeWidth="4" strokeDasharray="1 1" />
      <path d="M6 37v16" stroke="#6fdcb0" strokeWidth="4" strokeDasharray="1 1" />
    </svg>
  );
}

function SiteMark() {
  return (
    <div className="pointer-events-none absolute right-2 bottom-2 flex items-center font-bold opacity-80">
      <svg width="43" height="42" viewBox="0 0 43 42" aria-hidden="true">
        <path d="M42 1C24 2 4 12 1 25c-1 5 2 8 5 9C4 22 20 8 42 1z" fill="#3d8bd4" />
        <path d="M38 8C24 8 12 17 10 27c3 6 14 4 16-3-3 4-9 5-10 1 1-8 12-14 22-17z" fill="#58a9e0" />
        <path d="M31 14c4 10-6 19-22 21 13 3 31-2 32-15 0-4-4-7-10-6z" fill="#4cb873" />
        <path d="M3 41c7-2 11-5 20-5-5 3-12 5-20 5z" fill="#f0d94a" />
      </svg>
      <div className="flex flex-col">
        <span className="text-[21px] leading-6 text-[#4a8fd6]">极光下载站</span>
        <span className="text-base leading-5 text-[#3fb45c]">www.xz7.com</span>
      </div>
    </div>
  );
}

export default function App() {
  return (
    <div className="relative flex h-screen flex-col overflow-hidden bg-[#f5f7f9] font-['Noto_Sans','Noto_Sans_CJK_SC',sans-serif] text-xs text-[#222b3c]">
      <TitleBar />
      <div className="relative z-10 bg-white shadow-sm">
        <MenuRow />
        <Ribbon />
      </div>
      <main className="flex min-h-0 flex-1">
        <SideRuler />
        <div className="relative flex min-w-0 flex-1 flex-col overflow-hidden">
          <TopRuler />
          <div className="relative min-h-0 flex-1">
            <Page />
            <svg width="140" height="36" viewBox="0 0 140 36" className="absolute top-[377px] left-[calc(50%-431px)] drop-shadow-[2px_4px_2px_rgba(0,0,0,0.5)]" aria-hidden="true">
              <path d="M3 11l108 6.500" stroke="red" strokeWidth="3" strokeLinecap="round" />
              <path d="M107 10l23 9-24 7 5-8z" fill="red" />
            </svg>
          </div>
        </div>
        <ScrollBar />
        <PropertyPanel />
        <SideTools />
      </main>
      <StatusBar />
      <LevelMeter />
      <InputBar />
      <SiteMark />
    </div>
  );
}
